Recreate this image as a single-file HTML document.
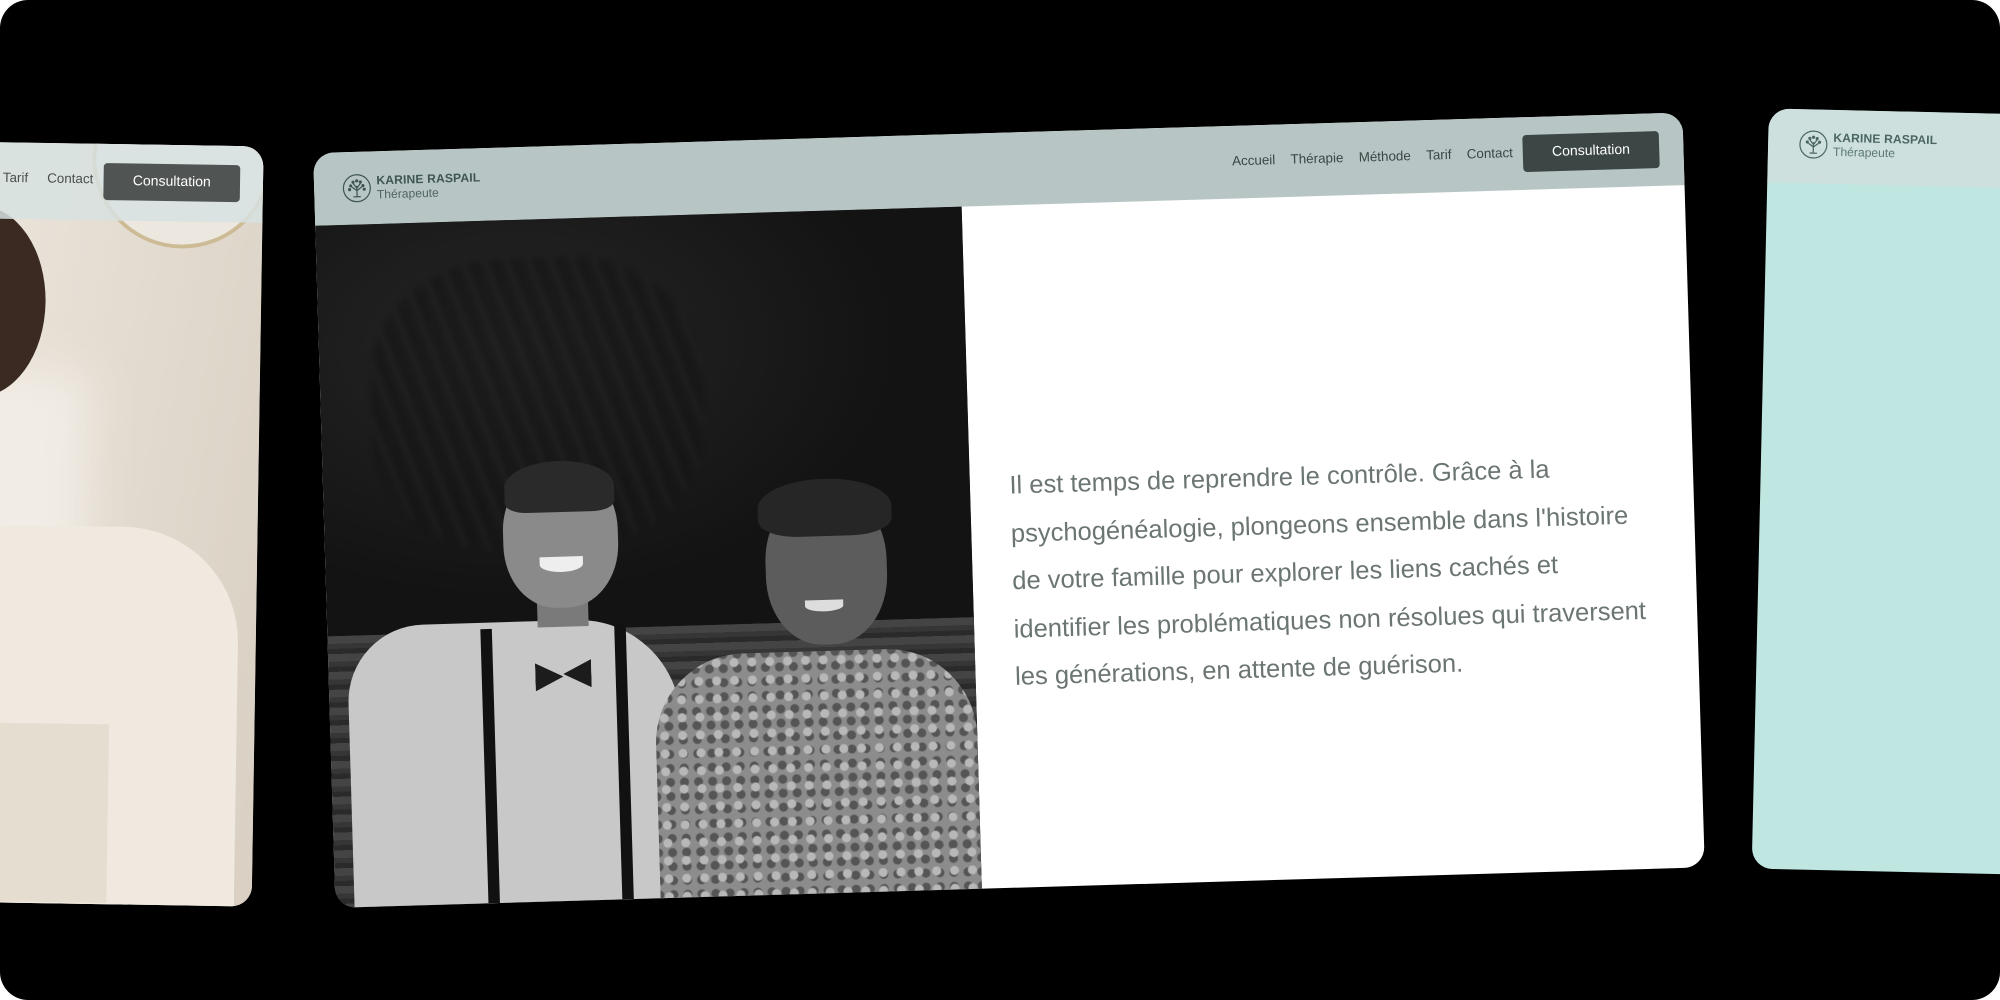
<!DOCTYPE html>
<html><head><meta charset="utf-8">
<style>
html,body{margin:0;padding:0;background:#fff;width:2000px;height:1000px;overflow:hidden}
#s{position:absolute;left:0;top:0;width:1568px;height:784px;transform:scale(1.27551);transform-origin:0 0;background:#000;border-radius:22px;overflow:hidden;font-family:"Liberation Sans",sans-serif}
.card{position:absolute;overflow:hidden;border-radius:16px}
.hdr{position:absolute;left:0;top:0;right:0}
.logo{position:absolute;display:flex;align-items:center;color:#3f5553}
.logo .t1{font-weight:bold;font-size:9.5px;letter-spacing:.1px;line-height:11px}
.logo .t2{font-size:9.5px;line-height:11px;opacity:.85}
.nav{position:absolute;font-size:10.5px;color:#3b4544}
.nav span{margin-right:12px}
.btn{position:absolute;background:#3b4645;color:#fff;font-size:11px;text-align:center;border-radius:3px}
.txt{position:absolute;color:#6b7573;font-size:20px;line-height:37.5px;white-space:nowrap}
</style></head><body>
<div id="s">

<!-- left card -->
<div class="card" style="left:-402px;top:110px;width:604px;height:596px;transform:rotate(0.9deg);background:#e4dcd0">
  <div style="position:absolute;left:0;top:0;width:100%;height:100%;background:linear-gradient(100deg,#d8cfc1 0%,#ebe4da 55%,#d9d0c3 100%)"></div>
  <div style="position:absolute;left:330px;top:180px;width:140px;height:260px;background:#f4f0ea;filter:blur(18px);opacity:.8"></div>
  <div style="position:absolute;left:470px;top:-60px;width:135px;height:135px;border-radius:50%;border:3px solid #cdbb95;background:#ece8e0"></div>
  <div style="position:absolute;left:330px;top:50px;width:105px;height:150px;border-radius:50%;background:#3a2a22"></div>
  <div style="position:absolute;left:320px;top:110px;width:80px;height:210px;border-radius:40%;background:#a87a5c"></div>
  <div style="position:absolute;left:300px;top:300px;width:290px;height:320px;border-radius:120px 90px 0 0;background:#efe9df"></div>
  <div style="position:absolute;left:395px;top:455px;width:95px;height:140px;background:#e2d9cc;opacity:.8"></div>
  <div class="hdr" style="height:60px;background:rgba(215,226,224,.85)"></div>
  <div class="nav" style="left:400px;top:22px;color:#4a4f4e"><span>Tarif</span> <span>Contact</span></div>
  <div class="btn" style="left:479px;top:15px;width:107px;height:29px;line-height:29px;background:#505453">Consultation</div>
</div>

<!-- center card -->
<div class="card" style="left:254px;top:104px;width:1074px;height:592px;transform:rotate(-1.7deg);background:#fff">
  <div class="hdr" style="height:57px;background:#b7c6c5"></div>
  <div class="logo" style="left:22px;top:17px">
    <svg width="23" height="23" viewBox="0 0 24 24" fill="none" stroke="#3f5553" stroke-width="1">
      <circle cx="12" cy="12" r="11"/>
      <path d="M12 19V10M12 14l-4-3M12 14l4-3M12 12l-3-4M12 12l3-4M9 19h6"/>
      <circle cx="7" cy="10" r=".8" fill="#3f5553"/><circle cx="17" cy="10" r=".8" fill="#3f5553"/><circle cx="9" cy="7" r=".8" fill="#3f5553"/><circle cx="15" cy="7" r=".8" fill="#3f5553"/><circle cx="12" cy="6" r=".8" fill="#3f5553"/><circle cx="6" cy="13" r=".8" fill="#3f5553"/><circle cx="18" cy="13" r=".8" fill="#3f5553"/>
    </svg>
    <div style="margin-left:4px"><div class="t1">KARINE RASPAIL</div><div class="t2">Thérapeute</div></div>
  </div>
  <div class="nav" style="left:720px;top:22px"><span>Accueil</span><span>Thérapie</span><span>Méthode</span><span>Tarif</span><span>Contact</span></div>
  <div class="btn" style="left:948px;top:14px;width:107px;height:29px;line-height:29px">Consultation</div>

  <!-- photo -->
  <div style="position:absolute;left:0;top:57px;width:507px;height:535px;background:#121212;overflow:hidden">
    <div style="position:absolute;left:0;top:0;width:507px;height:330px;background:radial-gradient(ellipse at 30% 30%,#262626 0%,#131313 60%)"></div>
    <div style="position:absolute;left:40px;top:30px;width:260px;height:230px;background:repeating-linear-gradient(70deg,#1a1a1a 0 4px,#262626 4px 6px,#151515 6px 16px);opacity:.6;border-radius:40%;filter:blur(2px)"></div>
    <!-- bench -->
    <div style="position:absolute;left:0;top:322px;width:507px;height:213px;background:repeating-linear-gradient(180deg,#444 0 6px,#363636 6px 10px,#2a2a2a 10px 14px)"></div>
    <!-- man -->
    <div style="position:absolute;left:15px;top:315px;width:260px;height:230px;border-radius:60px 80px 0 0;background:#c8c8c8"></div>
    <div style="position:absolute;left:120px;top:320px;width:9px;height:215px;background:#111"></div>
    <div style="position:absolute;left:225px;top:320px;width:9px;height:215px;background:#111"></div>
    <div style="position:absolute;left:162px;top:348px;width:22px;height:22px;background:#1c1c1c;clip-path:polygon(0 0,100% 50%,0 100%)"></div>
    <div style="position:absolute;left:184px;top:346px;width:22px;height:22px;background:#1c1c1c;clip-path:polygon(100% 0,0 50%,100% 100%)"></div>
    <div style="position:absolute;left:165px;top:280px;width:40px;height:40px;background:#7a7a7a"></div>
    <div style="position:absolute;left:140px;top:195px;width:90px;height:110px;border-radius:45%;background:#8a8a8a"></div>
    <div style="position:absolute;left:142px;top:190px;width:86px;height:40px;border-radius:50% 50% 20% 20%;background:#2a2a2a"></div>
    <div style="position:absolute;left:168px;top:265px;width:34px;height:12px;border-radius:0 0 50% 50%;background:#eee"></div>
    <!-- woman -->
    <div style="position:absolute;left:255px;top:345px;width:252px;height:200px;border-radius:70px 70px 0 0;background:#8c8c8c;background-image:radial-gradient(circle,#b8b8b8 0 3px,transparent 4px),radial-gradient(circle,#555 0 3px,transparent 4px);background-size:14px 14px,11px 11px;background-position:0 0,5px 6px"></div>
    <div style="position:absolute;left:345px;top:220px;width:95px;height:120px;border-radius:45%;background:#5c5c5c"></div>
    <div style="position:absolute;left:340px;top:210px;width:105px;height:45px;border-radius:50% 50% 30% 30%;background:#262626"></div>
    <div style="position:absolute;left:375px;top:305px;width:30px;height:9px;border-radius:0 0 50% 50%;background:#ddd"></div>
  </div>

  <div class="txt" style="left:538px;top:259px">Il est temps de reprendre le contrôle. Grâce à la<br>psychogénéalogie, plongeons ensemble dans l'histoire<br>de votre famille pour explorer les liens cachés et<br>identifier les problématiques non résolues qui traversent<br>les générations, en attente de guérison.</div>
</div>

<!-- right card -->
<div class="card" style="left:1380px;top:92px;width:620px;height:596px;transform:rotate(1.3deg);background:#bfe6e0">
  <div class="hdr" style="height:58px;background:#cde0de"></div>
  <div class="logo" style="left:24px;top:16px;color:#4a6664">
    <svg width="23" height="23" viewBox="0 0 24 24" fill="none" stroke="#4a6664" stroke-width="1">
      <circle cx="12" cy="12" r="11"/>
      <path d="M12 19V10M12 14l-4-3M12 14l4-3M12 12l-3-4M12 12l3-4M9 19h6"/>
      <circle cx="7" cy="10" r=".8" fill="#4a6664"/><circle cx="17" cy="10" r=".8" fill="#4a6664"/><circle cx="9" cy="7" r=".8" fill="#4a6664"/><circle cx="15" cy="7" r=".8" fill="#4a6664"/><circle cx="12" cy="6" r=".8" fill="#4a6664"/>
    </svg>
    <div style="margin-left:4px"><div class="t1">KARINE RASPAIL</div><div class="t2">Thérapeute</div></div>
  </div>
</div>

</div>
</body></html>
